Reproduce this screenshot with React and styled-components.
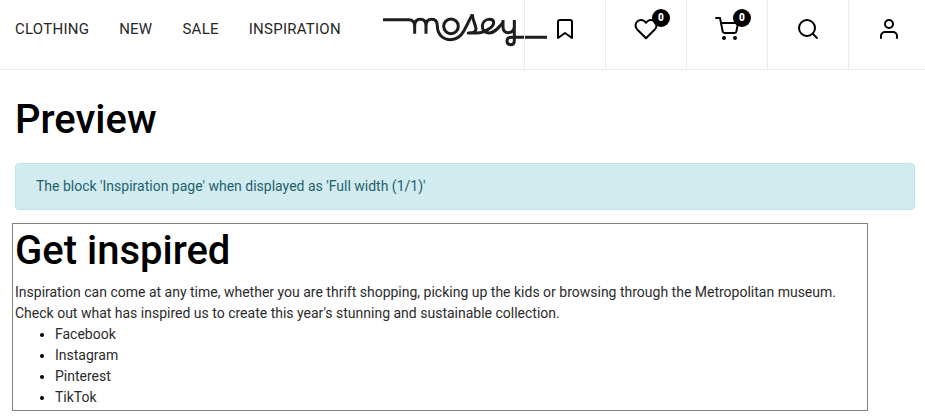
import React from "react";
import styled, { createGlobalStyle } from "styled-components";

const GlobalStyle = createGlobalStyle`
  *, *::before, *::after { box-sizing: border-box; }
  body {
    margin: 0;
    overflow: hidden;
    background: #fff;
    color: #000;
    font-family: Roboto, sans-serif;
    font-size: 14px;
    line-height: 21px;
  }
`;

const Header = styled.header`
  display: flex;
  height: 70px;
  border-bottom: 1px solid #ebebeb;
`;

const Nav = styled.nav`
  display: flex;
  flex: 0 0 383px;
  gap: 30px;
  padding: 18px 0 0 15px;
`;

const NavLink = styled.a`
  color: #262626;
  font-size: 15px;
  letter-spacing: 0.25px;
  line-height: 22px;
  white-space: nowrap;
`;

const Brand = styled.div`
  flex: 0 0 141px;
  min-width: 0;
  padding-top: 10px;
  svg { display: block; overflow: visible; }
`;

const Action = styled.div`
  position: relative;
  flex: 0 0 81px;
  padding: 17px 0 0 28px;
  border-left: 1px solid #ebebeb;
  svg { display: block; }
`;

const Badge = styled.span`
  position: absolute;
  top: 9px;
  left: 46px;
  width: 18px;
  height: 18px;
  border-radius: 50%;
  background: #000;
  color: #fff;
  font-size: 10px;
  font-weight: 900;
  line-height: 18px;
  text-align: center;
`;

const Main = styled.main`
  padding: 26px 10px 0 12px;
`;

const Title = styled.h1`
  margin: 0;
  font-size: 40px;
  font-weight: 500;
  line-height: 48px;
`;

const PageTitle = styled(Title)`
  margin: 0 0 19px 3px;
`;

const Notice = styled.div`
  height: 47px;
  margin: 0 0 13px 3px;
  padding: 12px 20px;
  border: 1px solid #bee5eb;
  border-radius: 4px;
  background: #d1ebef;
  color: #1f626d;
`;

const Block = styled.section`
  width: 856px;
  height: 188px;
  padding: 3px 2px 2px;
  border: 1px solid #808080;
`;

const BlockTitle = styled(Title)`
  margin-bottom: 7px;
`;

const Text = styled.p`
  margin: 0;
  color: #2b2b2b;
`;

const List = styled.ul`
  margin: 0;
  padding-left: 40px;
`;

const Item = styled.li`
  color: #2b2b2b;
  &::marker { color: #000; }
`;

const Icon = ({ children }) => (
  <svg width="24" height="24" viewBox="0 0 24 24" fill="none" stroke="#000" strokeWidth="2" strokeLinecap="round" strokeLinejoin="round">
    {children}
  </svg>
);

const Logo = () => (
  <svg width="164" height="36" viewBox="24 30 492 108" fill="none" stroke="#1d1d1b" strokeWidth="9" strokeLinejoin="round" aria-label="mosey">
    <path d="M24 59H102C113 59 119 67 119 78V101M119 78C119 65 126 58 136 58S153 65 153 78V101M153 78C153 65 160 58 170 58S187 65 187 78C187 103 204 119 227 119C247 119 258 108 266 94L292 43" />
    <circle cx="228" cy="79" r="22" />
    <path d="M292 43C292 61 303 75 303 87C303 96 296 99 280 99H306C330 99 356 80 356 68C356 61 351 58 344 58C330 58 322 68 322 79C322 92 331 99 343 99C359 99 371 83 384 68" />
    <path d="M384 60V80C384 92 390 98 400 98C411 98 418 91 418 79M418 60V122C418 130 414 134 407 134C400 134 396 130 396 123C396 116 401 112 409 112H516" />
  </svg>
);

const links = ["CLOTHING", "NEW", "SALE", "INSPIRATION"];
const channels = ["Facebook", "Instagram", "Pinterest", "TikTok"];

export default function App() {
  return (
    <>
      <GlobalStyle />
      <Header>
        <Nav>{links.map((l) => <NavLink key={l}>{l}</NavLink>)}</Nav>
        <Brand><Logo /></Brand>
        <Action>
          <Icon><path d="M19 21l-7-5-7 5V5a2 2 0 0 1 2-2h10a2 2 0 0 1 2 2z" /></Icon>
        </Action>
        <Action>
          <Icon><path d="M20.84 4.61a5.5 5.5 0 0 0-7.78 0L12 5.67l-1.06-1.06a5.5 5.5 0 0 0-7.78 7.78l1.06 1.06L12 21.23l7.78-7.78 1.06-1.06a5.5 5.5 0 0 0 0-7.78z" /></Icon>
          <Badge>0</Badge>
        </Action>
        <Action>
          <Icon>
            <circle cx="9" cy="21" r="1" />
            <circle cx="20" cy="21" r="1" />
            <path d="M1 1h4l2.68 13.39a2 2 0 0 0 2 1.61h9.72a2 2 0 0 0 2-1.61L23 6H6" />
          </Icon>
          <Badge>0</Badge>
        </Action>
        <Action>
          <Icon><circle cx="11" cy="11" r="8" /><path d="M21 21l-4.35-4.35" /></Icon>
        </Action>
        <Action>
          <Icon><path d="M20 21v-2a4 4 0 0 0-4-4H8a4 4 0 0 0-4 4v2" /><circle cx="12" cy="7" r="4" /></Icon>
        </Action>
      </Header>
      <Main>
        <PageTitle>Preview</PageTitle>
        <Notice>The block 'Inspiration page' when displayed as 'Full width (1/1)'</Notice>
        <Block>
          <BlockTitle>Get inspired</BlockTitle>
          <Text>
            Inspiration can come at any time, whether you are thrift shopping, picking up the kids or browsing through the Metropolitan museum.
            <br />
            Check out what has inspired us to create this year's stunning and sustainable collection.
          </Text>
          <List>{channels.map((c) => <Item key={c}>{c}</Item>)}</List>
        </Block>
      </Main>
    </>
  );
}
